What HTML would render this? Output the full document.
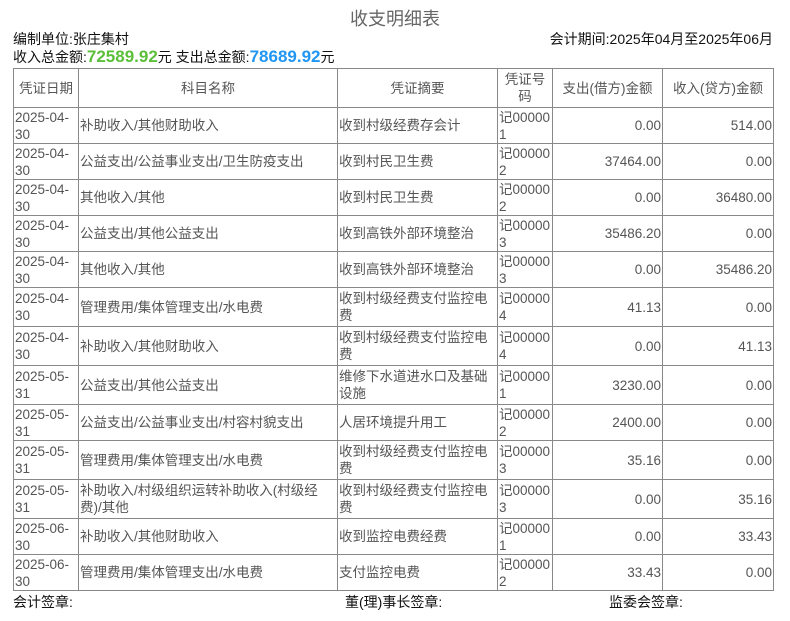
<!DOCTYPE html>
<html><head><meta charset="utf-8"><style>
body{margin:0;width:790px;height:621px;background:#fff;font-family:"Liberation Sans","Noto Sans CJK SC",sans-serif;color:#222;position:relative;overflow:hidden}
.t{position:absolute;left:0;width:790px;top:5px;text-align:center;font-size:18px;color:#666}
.a{position:absolute;font-size:14px;color:#111;white-space:nowrap}
table{position:absolute;left:13px;top:68px;border-collapse:collapse;table-layout:fixed;width:760px;font-size:13.5px;color:#555}
td,th{border:1px solid #888;padding:0 1px;line-height:17px;overflow:hidden;font-weight:normal;vertical-align:middle}
td:nth-child(4){word-break:break-all}
th{text-align:center;height:38px}
td.r{text-align:right}
tr.s td{height:35px}tr.l td{height:38px}
.g{color:#5bbf3a;font-size:17px;font-weight:bold}.b{color:#2196f3;font-size:17px;font-weight:bold}
</style></head><body>
<div class="t">收支明细表</div>
<div class="a" style="left:13px;top:29px">编制单位:张庄集村</div>
<div class="a" style="right:17px;top:29px">会计期间:2025年04月至2025年06月</div>
<div class="a" style="left:13px;top:47px">收入总金额:<span class="g">72589.92</span>元 支出总金额:<span class="b">78689.92</span>元</div>
<table>
<colgroup><col style="width:65px"><col style="width:259px"><col style="width:160px"><col style="width:55px"><col style="width:110px"><col style="width:111px"></colgroup>
<tr><th>凭证日期</th><th>科目名称</th><th>凭证摘要</th><th style="word-break:break-all">凭证号码</th><th>支出(借方)金额</th><th>收入(贷方)金额</th></tr>
<tr class="s"><td>2025-04-<br>30</td><td>补助收入/其他财助收入</td><td>收到村级经费存会计</td><td>记000001</td><td class="r">0.00</td><td class="r">514.00</td></tr>
<tr class="s"><td>2025-04-<br>30</td><td>公益支出/公益事业支出/卫生防疫支出</td><td>收到村民卫生费</td><td>记000002</td><td class="r">37464.00</td><td class="r">0.00</td></tr>
<tr class="s"><td>2025-04-<br>30</td><td>其他收入/其他</td><td>收到村民卫生费</td><td>记000002</td><td class="r">0.00</td><td class="r">36480.00</td></tr>
<tr class="s"><td>2025-04-<br>30</td><td>公益支出/其他公益支出</td><td>收到高铁外部环境整治</td><td>记000003</td><td class="r">35486.20</td><td class="r">0.00</td></tr>
<tr class="s"><td>2025-04-<br>30</td><td>其他收入/其他</td><td>收到高铁外部环境整治</td><td>记000003</td><td class="r">0.00</td><td class="r">35486.20</td></tr>
<tr class="l"><td>2025-04-<br>30</td><td>管理费用/集体管理支出/水电费</td><td>收到村级经费支付监控电费</td><td>记000004</td><td class="r">41.13</td><td class="r">0.00</td></tr>
<tr class="l"><td>2025-04-<br>30</td><td>补助收入/其他财助收入</td><td>收到村级经费支付监控电费</td><td>记000004</td><td class="r">0.00</td><td class="r">41.13</td></tr>
<tr class="l"><td>2025-05-<br>31</td><td>公益支出/其他公益支出</td><td>维修下水道进水口及基础设施</td><td>记000001</td><td class="r">3230.00</td><td class="r">0.00</td></tr>
<tr class="s"><td>2025-05-<br>31</td><td>公益支出/公益事业支出/村容村貌支出</td><td>人居环境提升用工</td><td>记000002</td><td class="r">2400.00</td><td class="r">0.00</td></tr>
<tr class="l"><td>2025-05-<br>31</td><td>管理费用/集体管理支出/水电费</td><td>收到村级经费支付监控电费</td><td>记000003</td><td class="r">35.16</td><td class="r">0.00</td></tr>
<tr class="l"><td>2025-05-<br>31</td><td>补助收入/村级组织运转补助收入(村级经费)/其他</td><td>收到村级经费支付监控电费</td><td>记000003</td><td class="r">0.00</td><td class="r">35.16</td></tr>
<tr class="s"><td>2025-06-<br>30</td><td>补助收入/其他财助收入</td><td>收到监控电费经费</td><td>记000001</td><td class="r">0.00</td><td class="r">33.43</td></tr>
<tr class="s"><td>2025-06-<br>30</td><td>管理费用/集体管理支出/水电费</td><td>支付监控电费</td><td>记000002</td><td class="r">33.43</td><td class="r">0.00</td></tr>
</table>
<div class="a" style="left:13px;top:592px">会计签章:</div>
<div class="a" style="left:345px;top:592px">董(理)事长签章:</div>
<div class="a" style="left:609px;top:592px">监委会签章:</div>
</body></html>
